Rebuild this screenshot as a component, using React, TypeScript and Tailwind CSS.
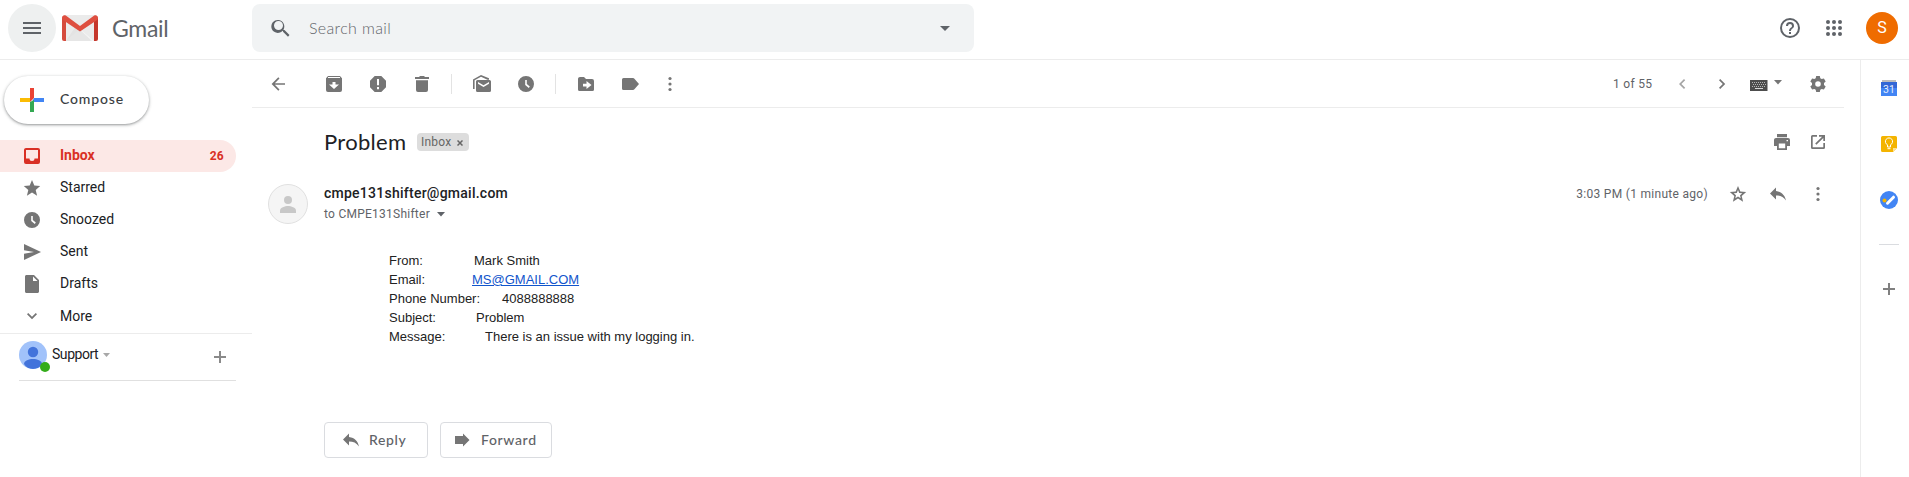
import React from "react";

type G = { children: React.ReactNode; w?: number; h?: number; className?: string };

/** Square glyph canvas; paths are drawn on a pixel grid of the same size. */
function Glyph({ children, w = 20, h = 20, className = "" }: G) {
  return (
    <svg width={w} height={h} viewBox={`0 0 ${w} ${h}`} fill="currentColor" className={`block shrink-0 ${className}`}>
      {children}
    </svg>
  );
}

const Clock = () => (
  <Glyph>
    <path fillRule="evenodd" d="M10 2a8 8 0 1 0 0 16 8 8 0 0 0 0-16zM9.2 6h1.6v4l3 2.6-1 1.3-3.6-3V6z" />
  </Glyph>
);
const Caret = ({ className = "" }: { className?: string }) => (
  <Glyph w={8} h={5} className={className}>
    <path d="M0 0h8L4 4.5z" />
  </Glyph>
);
const Dots = () => (
  <Glyph>
    <circle cx="10" cy="4.500" r="1.600" />
    <circle cx="10" cy="10" r="1.600" />
    <circle cx="10" cy="15.500" r="1.600" />
  </Glyph>
);
const ReplyGlyph = () => (
  <Glyph>
    <path d="M8 7V3.500L2 9.500l6 6v-4c4.200 0 7.500 1.300 10 5C17 11.500 14 7.800 8 7z" />
  </Glyph>
);
const Plus = ({ className = "" }: { className?: string }) => (
  <Glyph w={12} h={12} className={className}>
    <path d="M5 0h2v5h5v2H7v5H5V7H0V5h5z" />
  </Glyph>
);

function Logo() {
  return (
    <svg width="36" height="26" viewBox="0 0 36 26" className="ml-1.5 block shrink-0">
      <rect x="2" width="32" height="26" fill="#ebebeb" />
      <path d="M4 26L18 14l14 12z" fill="#f5f5f5" />
      <path d="M4 26l10-15 16 15z" fill="#e0e0e0" opacity=".7" />
      <path d="M0 2.500V24a2 2 0 0 0 2 2h2V6z" fill="#d54b3d" />
      <path d="M36 2.500V24a2 2 0 0 1-2 2h-2V6z" fill="#c5372c" />
      <path d="M0 2.800C0 .6 2 -.4 3.800.6L18 11 32.200.6C34 -.4 36 .6 36 2.800c0 1-.5 1.900-1.300 2.500L18 16.500 1.300 5.300C.5 4.700 0 3.800 0 2.800z" fill="#de4f40" />
    </svg>
  );
}

function Header() {
  return (
    <header className="flex h-[60px] shrink-0 items-start border-b border-[#ececec] pt-1 text-[#5f6368]">
      <div className="ml-2 flex size-12 shrink-0 items-center justify-center rounded-full bg-[#eef0f0]">
        <Glyph w={18} h={12}>
          <path d="M0 0h18v2H0zM0 5h18v2H0zM0 10h18v2H0z" />
        </Glyph>
      </div>
      <div className="flex h-12 w-[196px] shrink-0 items-center">
        <Logo />
        <span className="ml-3.5 font-['Lato'] text-[23px] tracking-[-0.3px]">Gmail</span>
      </div>
      <div className="flex h-12 w-[722px] shrink-0 items-center rounded-lg bg-[#f1f3f4] pr-6 pl-[17px]">
        <Glyph w={24} h={24}>
          <path d="M15.500 14h-.79l-.28-.27A6.500 6.500 0 1 0 13.730 14.700l.27.28v.79l5 4.990L20.490 19l-4.990-5zm-6 0a4.500 4.500 0 1 1 0-9 4.500 4.500 0 0 1 0 9z" />
        </Glyph>
        <span className="ml-4 flex-1 font-['Lato'] text-[16px] font-light tracking-[0.35px] text-[#5f6368]">Search mail</span>
        <Glyph w={10} h={5} className="mt-[1px]">
          <path d="M0 0h10L5 5z" />
        </Glyph>
      </div>
      <div className="flex h-12 flex-1 items-center justify-end pr-[11px]">
        <Glyph w={24} h={24}>
          <path d="M11 18h2v-2h-2v2zm1-16a10 10 0 1 0 0 20 10 10 0 0 0 0-20zm0 18a8 8 0 1 1 0-16 8 8 0 0 1 0 16zm0-14a4 4 0 0 0-4 4h2a2 2 0 1 1 4 0c0 2-3 1.750-3 5h2c0-2.250 3-2.500 3-5a4 4 0 0 0-4-4z" />
        </Glyph>
        <Glyph w={16} h={16} className="mr-6 ml-6">
          {[2, 8, 14].map((y) => [2, 8, 14].map((x) => <circle key={`${x}-${y}`} cx={x} cy={y} r="2" />))}
        </Glyph>
        <div className="flex size-8 items-center justify-center rounded-full bg-[#ef6c00] font-['Roboto'] text-[16px] text-white">S</div>
      </div>
    </header>
  );
}

const folders = [
  {
    name: "Starred",
    icon: (
      <Glyph>
        <path d="M10 2l2.300 5.500 5.900.5-4.500 3.900 1.400 5.800L10 14.600l-5.100 3.100 1.400-5.800L1.800 8l5.900-.5z" />
      </Glyph>
    ),
  },
  { name: "Snoozed", icon: <Clock /> },
  {
    name: "Sent",
    icon: (
      <Glyph>
        <path d="M2 2l17 8-17 8v-6.300L12 10 2 8.300z" />
      </Glyph>
    ),
  },
  {
    name: "Drafts",
    icon: (
      <Glyph>
        <path fillRule="evenodd" d="M4.500 1H12l5 5v11.500c0 .8-.7 1.500-1.500 1.500h-11C3.700 19 3 18.300 3 17.500v-15C3 1.700 3.700 1 4.500 1zM11 2.500V7h4.500z" />
      </Glyph>
    ),
  },
  {
    name: "More",
    icon: (
      <Glyph>
        <path d="M5 8.200L6.200 7l3.800 3.800L13.800 7 15 8.200l-5 5z" />
      </Glyph>
    ),
  },
];

function Sidebar() {
  return (
    <nav className="flex w-[252px] shrink-0 flex-col font-['Roboto'] text-[14px] text-[#202124]">
      <button className="mt-4 ml-1 flex h-12 w-[145px] items-center rounded-full bg-white pl-4 text-[#3c4043] shadow-[0_1px_2px_0_rgba(60,64,67,0.35),0_1px_3px_1px_rgba(60,64,67,0.18)]">
        <svg width="24" height="24" viewBox="0 0 24 24" className="block">
          <path d="M10 0h4v10l-4 4z" fill="#ea4335" />
          <path d="M0 10h10v4H0z" fill="#fbbc04" />
          <path d="M14 10h10v4H12z" fill="#4285f4" />
          <path d="M10 14l4-2v12h-4z" fill="#34a853" />
        </svg>
        <span className="ml-4 pb-[3px] font-['Lato'] text-[14px] font-medium tracking-[0.85px]">Compose</span>
      </button>
      <div className="mt-4 flex h-8 w-[236px] items-center rounded-r-full bg-[#fce8e6] pr-3 pl-[22px] font-bold text-[#d93025]">
        <Glyph>
          <path fillRule="evenodd" d="M4 2h12a2 2 0 0 1 2 2v12a2 2 0 0 1-2 2H4a2 2 0 0 1-2-2V4c0-1.100.9-2 2-2zm0 2v8.500h3.500a2.500 2.500 0 0 0 5 0H16V4z" />
        </Glyph>
        <span className="ml-[18px] flex-1 pb-0.5">Inbox</span>
        <span className="text-[12px] tracking-[0.3px]">26</span>
      </div>
      {folders.map((f) => (
        <div key={f.name} className="flex h-8 items-center pl-[22px]">
          <span className="text-[#757575]">{f.icon}</span>
          <span className={f.name === "More" ? "ml-[18px]" : "ml-[18px] pb-0.5"}>{f.name}</span>
        </div>
      ))}
      <div className="mt-[1px] h-px bg-[#ececec]" />
      <div className="ml-[19px] flex h-[47px] w-[217px] items-start border-b border-[#e0e0e0] pt-[7px]">
        <div className="relative">
          <svg width="28" height="28" viewBox="0 0 28 28" className="block">
            <defs>
              <clipPath id="face">
                <circle cx="14" cy="14" r="14" />
              </clipPath>
            </defs>
            <circle cx="14" cy="14" r="14" fill="#a1c2fa" />
            <g clipPath="url(#face)" fill="#4273db">
              <circle cx="14" cy="11" r="5.200" />
              <path d="M5 23c0-3.500 5-5 9-5s9 1.500 9 5c-2 3.500-5 5-9 5s-7-1.500-9-5z" />
            </g>
          </svg>
          <span className="absolute top-[21px] left-[21px] size-2.5 rounded-full bg-[#34ac1b]" />
        </div>
        <span className="ml-[5px] leading-[27px] tracking-[-0.45px]">Support</span>
        <Glyph w={7} h={4} className="mt-3 ml-[5px] text-[#a8a8a8]">
          <path d="M0 0h7L3.500 4z" />
        </Glyph>
        <Plus className="mt-[10px] mr-2.5 ml-auto text-[#8a8a8a]" />
      </div>
    </nav>
  );
}

function Toolbar() {
  return (
    <div className="flex h-12 w-[1592px] shrink-0 items-center border-b border-[#ececec] pl-4 font-['Roboto'] text-[#757575]">
      <Glyph>
        <path d="M17 9.200H6.800l4.700-4.700L10.300 3.300 3.600 10l6.700 6.700 1.200-1.200-4.700-4.700H17z" />
      </Glyph>
      <div className="ml-9 flex gap-6">
        <Glyph>
          <path fillRule="evenodd" d="M4 2h12l2 2.200V16a2 2 0 0 1-2 2H4a2 2 0 0 1-2-2V4.200zm0 1v1h12V3zm4.500 5v2.500H5l5 4.500 5-4.500h-3.500V8z" />
        </Glyph>
        <Glyph>
          <path fillRule="evenodd" d="M6.700 2h6.600L18 6.700v6.600L13.300 18H6.700L2 13.300V6.700zM9 5v6.300h2V5zm0 8v2.200h2V13z" />
        </Glyph>
        <Glyph>
          <path d="M3 3h4l1-1h4l1 1h4v2H3zM4 6.200h12V16a2 2 0 0 1-2 2H6a2 2 0 0 1-2-2z" />
        </Glyph>
      </div>
      <div className="ml-[19px] h-5 w-px bg-[#e3e3e3]" />
      <div className="ml-5 flex gap-6">
        <Glyph>
          <path d="M1 5.500L9 1l8 3.300v1.500h-1.500L9 2.700 2.600 6.300V15H1z" />
          <path fillRule="evenodd" d="M5.500 6h12A1.500 1.500 0 0 1 19 7.500v9a1.500 1.500 0 0 1-1.500 1.500h-12A1.500 1.500 0 0 1 4 16.500v-9A1.500 1.500 0 0 1 5.500 6zm.5 2v1.700l5.500 3.300 5.500-3.300V8l-5.500 3.200z" />
        </Glyph>
        <Clock />
      </div>
      <div className="ml-[19px] h-5 w-px bg-[#e3e3e3]" />
      <div className="ml-5 flex gap-6">
        <Glyph>
          <path fillRule="evenodd" d="M4 3h4l2 2h6a2 2 0 0 1 2 2v8.500a1.500 1.500 0 0 1-1.500 1.500h-13A1.500 1.500 0 0 1 2 15.500V5c0-1.100.9-2 2-2zm6.500 4v2.700H7v2.800h3.500V15l5-4z" />
        </Glyph>
        <Glyph>
          <path d="M3.500 4H13c.6 0 1 .2 1.400.7L19 10l-4.600 5.300c-.4.500-.8.7-1.400.7H3.500A1.500 1.500 0 0 1 2 14.500v-9A1.500 1.500 0 0 1 3.500 4z" />
        </Glyph>
      </div>
      <div className="ml-5">
        <Dots />
      </div>
      <span className="ml-[933px] w-[50px] text-[12px] tracking-[0.3px] whitespace-nowrap text-[#5f6368]">1 of 55</span>
      <Glyph className="ml-[9px] text-[#a5a5a5]">
        <path d="M12 5l1.200 1.200L9.400 10l3.800 3.800L12 15l-5-5z" />
      </Glyph>
      <Glyph className="ml-5">
        <path d="M8.200 5L7 6.200l3.800 3.800L7 13.800 8.200 15l5-5z" />
      </Glyph>
      <svg width="18" height="11" viewBox="0 0 18 11" className="mt-[3px] ml-[18px] block">
        <path d="M0 0h17.500v11H0z" fill="#4d4d4d" />
        <path d="M2 2.500h14M3 4.500h13M2 6.500h14" stroke="#b4b4b4" strokeWidth="1" strokeDasharray="1 1" />
        <path d="M5 8.500h8" stroke="#d8d8d8" strokeWidth="1" />
      </svg>
      <Caret className="ml-1.5 -mt-[3px]" />
      <Glyph className="ml-[26px]">
        <path
          fillRule="evenodd"
          d="M8.200 2h3.600l.5 2.300 1.400.8 2.200-.7 1.800 3.100-1.700 1.600v1.800l1.700 1.600-1.800 3.100-2.200-.7-1.400.8-.5 2.300H8.200l-.5-2.300-1.400-.8-2.200.7-1.800-3.100L4 10.900V9.100L2.300 7.500l1.800-3.100 2.200.7 1.400-.8zM10 7.200a2.800 2.800 0 1 0 0 5.600 2.800 2.800 0 0 0 0-5.600z"
        />
      </Glyph>
    </div>
  );
}

const fields = [
  { label: "From:", value: "Mark Smith", w: "w-[85px]" },
  { label: "Email:", value: "MS@GMAIL.COM", w: "w-[83px]", link: true },
  { label: "Phone Number:", value: "4088888888", w: "w-[113px]" },
  { label: "Subject:", value: "Problem", w: "w-[87px]" },
  { label: "Message:", value: "There is an issue with my logging in.", w: "w-[96px]" },
];

function Message() {
  return (
    <section className="flex w-[1592px] flex-col font-['Roboto'] text-[#757575]">
      <div className="mt-5 flex h-7 items-center pl-[72px]">
        <h1 className="w-[93px] pb-0.5 font-['Lato'] text-[22px] tracking-[0.3px] text-[#202124]">Problem</h1>
        <span className="flex h-[18px] w-[52px] items-center rounded bg-[#ddd] pl-1 text-[12px] tracking-[0.2px] text-[#666]">
          Inbox
          <Glyph w={6} h={6} className="mt-px ml-1.5">
            <path d="M.5.5l5 5M5.500.5l-5 5" stroke="currentColor" strokeWidth="1.500" />
          </Glyph>
        </span>
        <Glyph className="ml-auto">
          <path fillRule="evenodd" d="M5 2h10v3.300H5zM4 6h12a2 2 0 0 1 2 2v6h-3v4H5v-4H2V8c0-1.100.9-2 2-2zm2.800 5.500v4.700h6.400v-4.700zM14.500 8v1.300h1.500V8z" />
        </Glyph>
        <Glyph className="mr-4 ml-4">
          <path d="M9 3v1.700H4.700v10.600h10.600V11H17v4.500a1.500 1.500 0 0 1-1.500 1.500h-11A1.500 1.500 0 0 1 3 15.500v-11A1.500 1.500 0 0 1 4.500 3zM11 3h6v6h-1.700V5.900l-6.900 6.900-1.200-1.200 6.900-6.900H11z" />
        </Glyph>
      </div>
      <div className="mt-7 flex h-10 pl-4">
        <svg width="40" height="40" viewBox="0 0 40 40" className="block shrink-0">
          <circle cx="20" cy="20" r="19.500" fill="#f5f5f5" stroke="#e0e0e0" />
          <g fill="#c8c8c8">
            <circle cx="20" cy="16" r="4" />
            <path d="M12 29v-2.500c0-3 5-4.500 8-4.500s8 1.500 8 4.500V29z" />
          </g>
        </svg>
        <div className="ml-4">
          <div className="h-5 text-[14px] leading-[18px] font-medium tracking-[0.25px] text-[#202124]">cmpe131shifter@gmail.com</div>
          <div className="flex h-5 items-center text-[12px] tracking-[0.25px] text-[#5f6368]">
            to CMPE131Shifter
            <Caret className="ml-[7px]" />
          </div>
        </div>
        <div className="mr-4 ml-auto flex h-5 items-center">
          <span className="mr-5 text-[12px] tracking-[0.3px] text-[#5f6368]">3:03 PM (1 minute ago)</span>
          <Glyph>
            <path
              fillRule="evenodd"
              d="M10 2l2.300 5.500 5.900.5-4.500 3.900 1.400 5.800L10 14.600l-5.100 3.100 1.400-5.800L1.800 8l5.900-.5zm0 4L8.800 8.900l-3.100.3L8 11.200l-.7 3.100 2.700-1.700 2.700 1.700-.7-3.100 2.300-2-3.100-.3z"
            />
          </Glyph>
          <div className="mr-5 ml-5">
            <ReplyGlyph />
          </div>
          <Dots />
        </div>
      </div>
      <div className="mt-[27px] ml-[137px] flex flex-col font-['Liberation_Sans'] text-[13px] leading-[19px] text-[#222]">
        {fields.map((f) => (
          <div key={f.label} className="flex whitespace-nowrap">
            <span className={f.w}>{f.label}</span>
            {f.link ? <a className="text-[#15c] underline">{f.value}</a> : <span>{f.value}</span>}
          </div>
        ))}
      </div>
      <div className="mt-[76px] ml-[72px] flex gap-3 font-['Lato'] text-[14px] font-medium tracking-[0.65px] text-[#5f6368]">
        <button className="flex h-9 w-[104px] items-center rounded border border-[#dadce0] pl-4">
          <span className="text-[#757575]">
            <ReplyGlyph />
          </span>
          <span className="ml-2 pb-0.5">Reply</span>
        </button>
        <button className="flex h-9 w-28 items-center rounded border border-[#dadce0] pl-3">
          <Glyph className="text-[#757575]">
            <path d="M2 6h8V3.500l6.500 6.500-6.500 6.500V14H2z" />
          </Glyph>
          <span className="ml-2 pb-0.5">Forward</span>
        </button>
      </div>
    </section>
  );
}

function SidePanel() {
  return (
    <aside className="ml-4 flex w-[49px] shrink-0 flex-col items-center border-l border-[#ececec] pt-[19px] pl-[7px]">
      <svg width="18" height="18" viewBox="0 0 18 18" className="block">
        <path d="M2 1h14v3H2z" fill="#bdbdbd" />
        <path d="M1 3h16v14H1z" fill="#4285f4" />
        <path d="M1 3h16v6H1z" fill="#3367d6" />
        <text x="9" y="14" textAnchor="middle" fontSize="10.500" fontFamily="Roboto" fill="#e8effd">31</text>
      </svg>
      <svg width="16" height="16" viewBox="0 0 16 16" className="mt-[39px] block">
        <path d="M1.500 0h13A1.500 1.500 0 0 1 16 1.500V12l-4 4H1.500A1.500 1.500 0 0 1 0 14.500v-13A1.500 1.500 0 0 1 1.500 0z" fill="#f4b400" />
        <path d="M16 12l-4 4v-4z" fill="#fde293" />
        <path d="M6.500 10V8.800a3.600 3.600 0 1 1 3 0V11h-3zM6.500 12.700h3" fill="none" stroke="#fff" strokeWidth="1" />
      </svg>
      <svg width="18" height="18" viewBox="0 0 18 18" className="mt-[39px] block">
        <circle cx="9" cy="9" r="9" fill="#4285f4" />
        <path d="M7.500 12.200l6-6" stroke="#fff" strokeWidth="3" strokeLinecap="round" />
        <circle cx="4.500" cy="9.500" r="2" fill="#f4b400" />
      </svg>
      <div className="mt-[35px] h-px w-5 bg-[#dadce0]" />
      <Plus className="mt-[38px] text-[#808080]" />
    </aside>
  );
}

export default function App() {
  return (
    <div className="flex h-[477px] w-[1909px] flex-col overflow-hidden bg-white">
      <Header />
      <div className="flex flex-1">
        <Sidebar />
        <main className="flex w-[1592px] shrink-0 flex-col">
          <Toolbar />
          <Message />
        </main>
        <SidePanel />
      </div>
    </div>
  );
}
